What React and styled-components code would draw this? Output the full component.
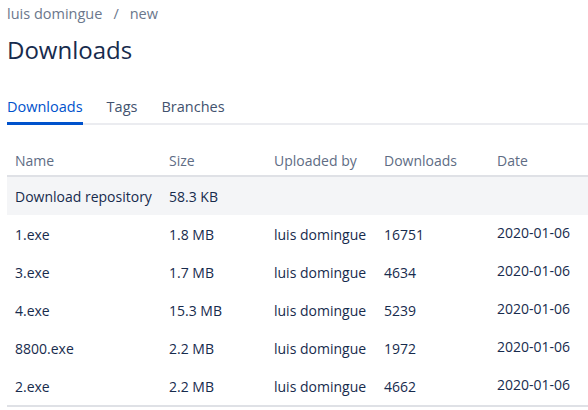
import React from "react";
import styled, { createGlobalStyle } from "styled-components";

const files = [
  { name: "1.exe", size: "1.8 MB", user: "luis domingue", count: "16751", date: "2020-01-06" },
  { name: "3.exe", size: "1.7 MB", user: "luis domingue", count: "4634", date: "2020-01-06" },
  { name: "4.exe", size: "15.3 MB", user: "luis domingue", count: "5239", date: "2020-01-06" },
  { name: "8800.exe", size: "2.2 MB", user: "luis domingue", count: "1972", date: "2020-01-06" },
  { name: "2.exe", size: "2.2 MB", user: "luis domingue", count: "4662", date: "2020-01-06" },
];

const GlobalStyle = createGlobalStyle`
  body {
    margin: 0;
    background: #fff;
    font-family: "Open Sans", "Noto Sans", sans-serif;
    color: #172b4d;
    overflow: hidden;
  }
`;

const Page = styled.div`
  width: 588px;
  height: 410px;
  overflow: hidden;
  padding-left: 7px;
  box-sizing: border-box;
`;

const Breadcrumb = styled.div`
  display: flex;
  gap: 11px;
  height: 26px;
  align-items: center;
  font-size: 14.5px;
  color: #6b778c;
`;

const Title = styled.h1`
  margin: 9px 0 0;
  font-size: 24px;
  font-weight: 500;
  line-height: 30px;
  color: #172b4d;
`;

const TabBar = styled.div`
  display: flex;
  gap: 24px;
  margin-top: 32px;
  border-bottom: 2px solid #ebecf0;
  width: 700px;
`;

const Tab = styled.div`
  font-size: 14.5px;
  font-weight: 500;
  line-height: 20px;
  padding-bottom: 5px;
  margin-bottom: -2px;
  color: ${(p) => (p.active ? "#0052cc" : "#42526e")};
  border-bottom: 3px solid ${(p) => (p.active ? "#0052cc" : "transparent")};
`;

const Table = styled.table`
  margin-top: 21px;
  border-collapse: collapse;
  width: 620px;
  font-size: 14px;
  color: #172b4d;
  th,
  td {
    text-align: left;
    padding: 0 8px;
    white-space: nowrap;
  }
  thead th {
    font-weight: 500;
    color: #5e6c84;
    height: 29px;
    border-bottom: 2px solid #dfe1e6;
  }
  tbody {
    border-bottom: 2px solid #dfe1e6;
  }
  tbody td {
    height: 38px;
  }
`;

const Row = styled.tr`
  background: ${(p) => (p.shaded ? "#f4f5f7" : "transparent")};
`;

const DateCell = styled.td`
  span {
    position: relative;
    top: -2px;
  }
`;

export default function App() {
  return (
    <Page>
      <GlobalStyle />
      <Breadcrumb>
        <span>luis domingue</span>
        <span>/</span>
        <span>new</span>
      </Breadcrumb>
      <Title>Downloads</Title>
      <TabBar>
        <Tab active>Downloads</Tab>
        <Tab>Tags</Tab>
        <Tab>Branches</Tab>
      </TabBar>
      <Table>
        <colgroup>
          <col style={{ width: 154 }} />
          <col style={{ width: 105 }} />
          <col style={{ width: 110 }} />
          <col style={{ width: 113 }} />
          <col />
        </colgroup>
        <thead>
          <tr>
            <th>Name</th>
            <th>Size</th>
            <th>Uploaded by</th>
            <th>Downloads</th>
            <th>Date</th>
          </tr>
        </thead>
        <tbody>
          <Row shaded>
            <td>Download repository</td>
            <td>58.3 KB</td>
            <td></td>
            <td></td>
            <td></td>
          </Row>
          {files.map((f) => (
            <Row key={f.name}>
              <td>{f.name}</td>
              <td>{f.size}</td>
              <td>{f.user}</td>
              <td>{f.count}</td>
              <DateCell>
                <span>{f.date}</span>
              </DateCell>
            </Row>
          ))}
        </tbody>
      </Table>
    </Page>
  );
}
